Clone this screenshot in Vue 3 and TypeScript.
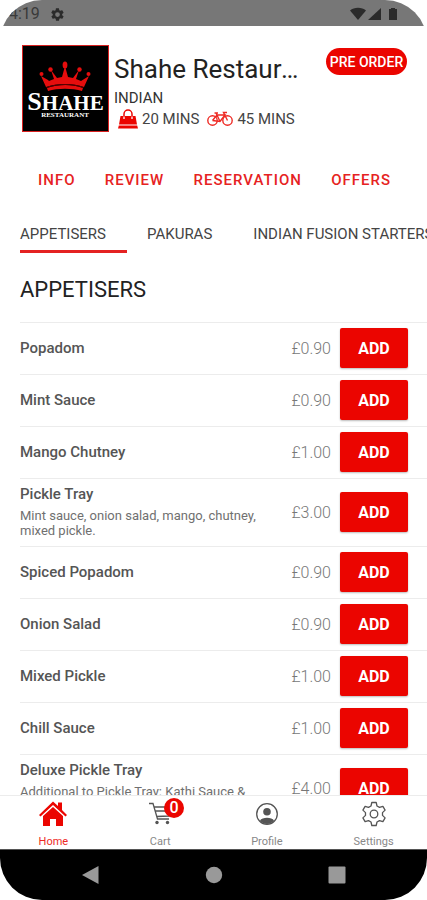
<script setup lang="ts">
import { ref } from 'vue'

interface MenuItem {
  name: string
  price: string
  description?: string
}

const sections: string[] = ['INFO', 'REVIEW', 'RESERVATION', 'OFFERS']
const categories: string[] = ['APPETISERS', 'PAKURAS', 'INDIAN FUSION STARTERS']
const activeCategory = ref<string>('APPETISERS')

const items: MenuItem[] = [
  { name: 'Popadom', price: '£0.90' },
  { name: 'Mint Sauce', price: '£0.90' },
  { name: 'Mango Chutney', price: '£1.00' },
  { name: 'Pickle Tray', price: '£3.00', description: 'Mint sauce, onion salad, mango, chutney, mixed pickle.' },
  { name: 'Spiced Popadom', price: '£0.90' },
  { name: 'Onion Salad', price: '£0.90' },
  { name: 'Mixed Pickle', price: '£1.00' },
  { name: 'Chill Sauce', price: '£1.00' },
  { name: 'Deluxe Pickle Tray', price: '£4.00', description: 'Additional to Pickle Tray: Kathi Sauce &' },
]

const cartCount = ref<number>(0)
</script>

<template>
  <div class="phone">
    <div class="status-bar">
      <span class="clock">4:19</span>
      <svg class="status-gear" viewBox="0 0 24 24" aria-hidden="true">
        <path fill-rule="evenodd" d="M19.4 13c.1-.3.1-.7.1-1s0-.7-.1-1l2.1-1.6c.2-.2.3-.4.1-.7l-2-3.4c-.1-.2-.4-.3-.6-.2l-2.5 1c-.5-.4-1.1-.7-1.7-1l-.4-2.6c0-.3-.2-.5-.5-.5h-4c-.3 0-.5.2-.5.5L9 5.100c-.6.3-1.2.6-1.7 1l-2.5-1c-.2-.1-.5 0-.6.2l-2 3.400c-.1.3-.1.5.1.7L4.500 11c0 .3-.1.7-.1 1s0 .7.1 1l-2.1 1.600c-.2.2-.3.4-.1.7l2 3.400c.1.2.4.3.6.2l2.5-1c.5.4 1.1.7 1.7 1l.4 2.600c0 .3.2.5.5.5h4c.3 0 .5-.2.5-.5l.4-2.600c.6-.3 1.2-.6 1.7-1l2.5 1c.2.1.5 0 .6-.2l2-3.400c.1-.3.1-.5-.1-.7zM12 15.800a3.800 3.800 0 1 1 0-7.600 3.800 3.800 0 0 1 0 7.600z" />
      </svg>
      <svg class="status-signals" viewBox="0 0 48 14" aria-hidden="true">
        <path d="M0 3.500C4-.3 12-.3 16 3.500L8 13z" />
        <path d="M31 1v12H18z" />
        <path d="M39 2h2V1h4v1h2v11h-8z" />
      </svg>
    </div>

    <main class="content">
      <header class="restaurant">
        <svg class="logo" viewBox="0 0 87 87" role="img" aria-label="Shahe Restaurant">
          <rect x=".5" y=".5" width="86" height="86" fill="#000" stroke="#d8201f" />
          <g fill="#e60d0d">
            <path d="M24 42 19 31l7 4 1 1 5-2-3-9 6 8 5-1 3-11 3 11 5 1 6-8-3 9 5 2 8-5-5 11c-11-4-27-4-38 0z" />
            <path d="M25 43c11-4 26-4 36 0l-1 3c-10-3-24-3-34 0z" />
            <circle cx="19.500" cy="29" r="2" /><circle cx="28.500" cy="24.500" r="2.200" />
            <ellipse cx="43" cy="20" rx="2.400" ry="3.500" />
            <circle cx="57.500" cy="24.500" r="2.200" /><circle cx="66.500" cy="29" r="2" />
          </g>
          <path d="M24.500 42.500c11-4 26-4 37 0" fill="none" stroke="#5c0000" />
          <text class="logo-name" x="43.500" y="65" text-anchor="middle"><tspan class="logo-initial">S</tspan>HAHE</text>
          <text class="logo-sub" x="43" y="72" text-anchor="middle">RESTAURANT</text>
        </svg>
        <div class="summary">
          <div class="title-row">
            <h1>Shahe Restaurant</h1>
            <button class="pre-order" type="button">PRE ORDER</button>
          </div>
          <p class="cuisine">INDIAN</p>
          <div class="times">
            <svg class="bag" viewBox="0 0 20 20" aria-hidden="true">
              <path d="M2.500 7h15l1.500 8.500H1z M.8 16.500h18.400l.8 3H0z" />
              <path d="M6 10V5a4 4 0 0 1 8 0v5" fill="none" stroke="#eb0500" stroke-width="1.500" />
              <path d="M6 7.500V10M14 7.500V10" stroke="#fff" stroke-width="1.300" />
            </svg>
            <span>20 MINS</span>
            <svg class="bike" viewBox="0 0 26 16" aria-hidden="true">
              <circle cx="5.500" cy="9.500" r="4.700" /><circle cx="20.500" cy="9.500" r="4.700" />
              <path d="M5.500 9.500 10 4h8l-5 6.500-7.500-1M9 2l4 8.500M7.500 2H11M20.500 9.500 16.500 1.500H20" />
            </svg>
            <span>45 MINS</span>
          </div>
        </div>
      </header>

      <nav class="sections" aria-label="Restaurant">
        <a v-for="section in sections" :key="section" href="#">{{ section }}</a>
      </nav>

      <div class="categories" role="tablist">
        <button
          v-for="category in categories"
          :key="category"
          class="category"
          :class="{ active: category === activeCategory }"
          type="button"
          role="tab"
          :aria-selected="category === activeCategory"
          @click="activeCategory = category"
        >
          {{ category }}
        </button>
      </div>

      <h2>APPETISERS</h2>
      <ul class="menu">
        <li v-for="item in items" :key="item.name" class="item">
          <div class="item-text">
            <h3>{{ item.name }}</h3>
            <p v-if="item.description">{{ item.description }}</p>
          </div>
          <span class="price">{{ item.price }}</span>
          <button class="add" type="button" @click="cartCount++">ADD</button>
        </li>
      </ul>
    </main>

    <nav class="tab-bar" aria-label="Main">
      <a class="tab current" href="#">
        <svg viewBox="0 0 28 26" aria-hidden="true">
          <path d="M14 .5 19 5V1.500h4V9l5 5-1.500 1.500L14 4 1.500 15.500 0 14z" />
          <path d="M14 6 24 15v10h-7v-7h-6v7H4V15z" />
        </svg>
        <span>Home</span>
      </a>
      <a class="tab" href="#">
        <svg viewBox="0 0 28 26" aria-hidden="true">
          <g fill="none" stroke="#555" stroke-width="1.300">
            <path d="M3 2.500h4L11.500 18H23M7.800 6H25l-2 9-12.300.5M9 10h15" />
          </g>
          <circle cx="11" cy="21.500" r="1.700" /><circle cx="21.500" cy="21.500" r="1.700" />
        </svg>
        <span class="badge">{{ cartCount }}</span>
        <span>Cart</span>
      </a>
      <a class="tab" href="#">
        <svg viewBox="0 0 28 26" aria-hidden="true">
          <circle cx="14" cy="13" r="10.300" fill="none" stroke="#555" stroke-width="1.300" />
          <circle cx="14" cy="10.800" r="3.800" />
          <path d="M7 19.500c2-3.800 12-3.800 14 0-3 4.500-11 4.500-14 0z" />
        </svg>
        <span>Profile</span>
      </a>
      <a class="tab" href="#">
        <svg viewBox="0 0 28 26" aria-hidden="true">
          <g fill="none" stroke="#555" stroke-width="1.300" stroke-linejoin="round">
            <path d="M11.800 1.500h4.400l.8 3.500 2.500 1.400 3.400-1.100 2.200 3.800-2.600 2.500v2.800l2.600 2.500-2.200 3.800-3.400-1.100-2.500 1.400-.8 3.500h-4.400L11 21l-2.500-1.400-3.400 1.100-2.200-3.800 2.600-2.500v-2.800L2.900 9.100l2.200-3.800 3.400 1.100L11 5z" />
            <circle cx="14" cy="13" r="3.800" />
          </g>
        </svg>
        <span>Settings</span>
      </a>
    </nav>

    <div class="system-bar">
      <button type="button" aria-label="Back">
        <svg viewBox="0 0 18 18"><path d="M0 9 16.500 0v18z" /></svg>
      </button>
      <button type="button" aria-label="Home screen">
        <svg viewBox="0 0 18 18"><circle cx="9" cy="9" r="8.200" /></svg>
      </button>
      <button type="button" aria-label="Recent apps">
        <svg viewBox="0 0 18 18"><rect x=".5" y=".5" width="17" height="17" rx="1" /></svg>
      </button>
    </div>
  </div>
</template>

<style>
body {
  background: #fff;
}
</style>

<style scoped>
.phone {
  display: flex;
  flex-direction: column;
  height: 100vh;
  overflow: hidden;
  border-radius: 42px;
  background: #fff;
  color: #222;
  font-family: Roboto, "Liberation Sans", sans-serif;
}

.phone * {
  box-sizing: border-box;
}

h1,
h2,
h3,
p,
ul {
  margin: 0;
  padding: 0;
  font-weight: 400;
}

button {
  padding: 0;
  border: 0;
  background: none;
  font: inherit;
  color: inherit;
}

a {
  color: inherit;
  text-decoration: none;
}

.status-bar {
  display: flex;
  flex: none;
  align-items: center;
  height: 26px;
  padding: 2px 29px 0 9px;
  background: #777;
  fill: #2b2b2b;
  color: #3a3a3a;
}

.clock {
  font-size: 16px;
  line-height: 20px;
}

.status-gear {
  width: 15px;
  height: 15px;
  margin-left: 10px;
}

.status-signals {
  width: 48px;
  height: 14px;
  margin-left: auto;
}

.content {
  flex: 1;
  min-height: 0;
  overflow: hidden;
}

.restaurant {
  display: flex;
  gap: 5px;
  padding: 19px 20px 0 22px;
}

.logo {
  flex: none;
  width: 87px;
  height: 87px;
}

.logo-name,
.logo-sub {
  fill: #fff;
  font-family: "Liberation Serif", serif;
  font-weight: 700;
}

.logo-name {
  font-size: 21px;
}

.logo-initial {
  font-size: 26px;
}

.logo-sub {
  font-size: 7px;
}

.summary {
  flex: 1;
  min-width: 0;
}

.title-row {
  display: flex;
  align-items: flex-start;
  justify-content: space-between;
  padding-top: 3px;
}

h1 {
  width: 192px;
  padding-top: 5px;
  overflow: hidden;
  font-size: 26px;
  line-height: 32px;
  text-overflow: ellipsis;
  white-space: nowrap;
}

.pre-order {
  flex: none;
  width: 81px;
  height: 27px;
  border-radius: 14px;
  background: #eb0500;
  font-size: 14px;
  font-weight: 500;
  color: #fff;
}

.cuisine {
  padding-top: 3px;
  font-size: 15px;
  line-height: 20px;
  color: #333;
}

.times {
  display: flex;
  align-items: center;
  padding-left: 4px;
  font-size: 15px;
  line-height: 22px;
  color: #444;
}

.bag {
  width: 20px;
  height: 20px;
  margin-right: 4px;
  fill: #eb0500;
}

.bike {
  width: 26px;
  height: 16px;
  margin: 0 4px 0 8px;
  fill: none;
  stroke: #ee2a24;
  stroke-width: 1.400;
}

.sections {
  display: flex;
  justify-content: space-between;
  padding: 37px 36px 0 38px;
  font-size: 15px;
  font-weight: 500;
  line-height: 22px;
  letter-spacing: 1px;
  color: #e62222;
}

.categories {
  display: flex;
  gap: 20px;
  margin-top: 34px;
  padding-left: 20px;
  overflow: hidden;
}

.category {
  flex: none;
  height: 28px;
  padding: 0 21px 7px 0;
  border-bottom: 3px solid transparent;
  font-size: 15px;
  line-height: 18px;
  white-space: nowrap;
  color: #444;
}

.category.active {
  border-color: #e42222;
}

h2 {
  padding: 23px 20px 18px;
  font-size: 22px;
  line-height: 28px;
}

.menu {
  padding-left: 20px;
  list-style: none;
}

.item {
  display: flex;
  align-items: center;
  padding: 5px 19px 6px 0;
  border-top: 1px solid #ececec;
}

.item-text {
  flex: 1;
}

.item h3 {
  font-size: 15px;
  font-weight: 500;
  line-height: 20px;
  color: #555;
}

.item p {
  max-width: 240px;
  min-height: 36px;
  padding: 4px 0 2px;
  font-size: 13px;
  line-height: 15px;
  color: #707070;
}

.price {
  margin-right: 9px;
  font-size: 16px;
  font-weight: 300;
  color: #777;
}

.add {
  width: 68px;
  height: 40px;
  border-radius: 2px;
  background: #eb0500;
  box-shadow: 0 1px 2px #0004;
  font-size: 16px;
  font-weight: 700;
  color: #fff;
}

.tab-bar {
  display: grid;
  flex: none;
  grid-template-columns: repeat(4, 1fr);
  height: 54px;
  border-top: 1px solid #ececec;
  background: #fff;
}

.tab {
  position: relative;
  display: flex;
  flex-direction: column;
  align-items: center;
  padding-top: 5px;
  fill: #555;
  font-size: 11px;
  line-height: 12px;
  color: #888;
}

.tab svg {
  width: 28px;
  height: 26px;
  margin-bottom: 9px;
}

.tab.current {
  fill: #eb0500;
  color: #ee2a24;
}

.badge {
  position: absolute;
  top: 2px;
  left: calc(50% + 4px);
  width: 20px;
  height: 20px;
  border-radius: 50%;
  background: #eb0500;
  font-size: 16px;
  font-weight: 500;
  line-height: 20px;
  text-align: center;
  color: #fff;
}

.system-bar {
  display: grid;
  flex: none;
  grid-template-columns: repeat(3, 1fr);
  height: 51px;
  padding: 0 29px;
  border-top: 1px solid #555;
  background: #000;
  fill: #999;
}

.system-bar svg {
  display: block;
  width: 18px;
  height: 18px;
  margin: 0 auto;
}
</style>
